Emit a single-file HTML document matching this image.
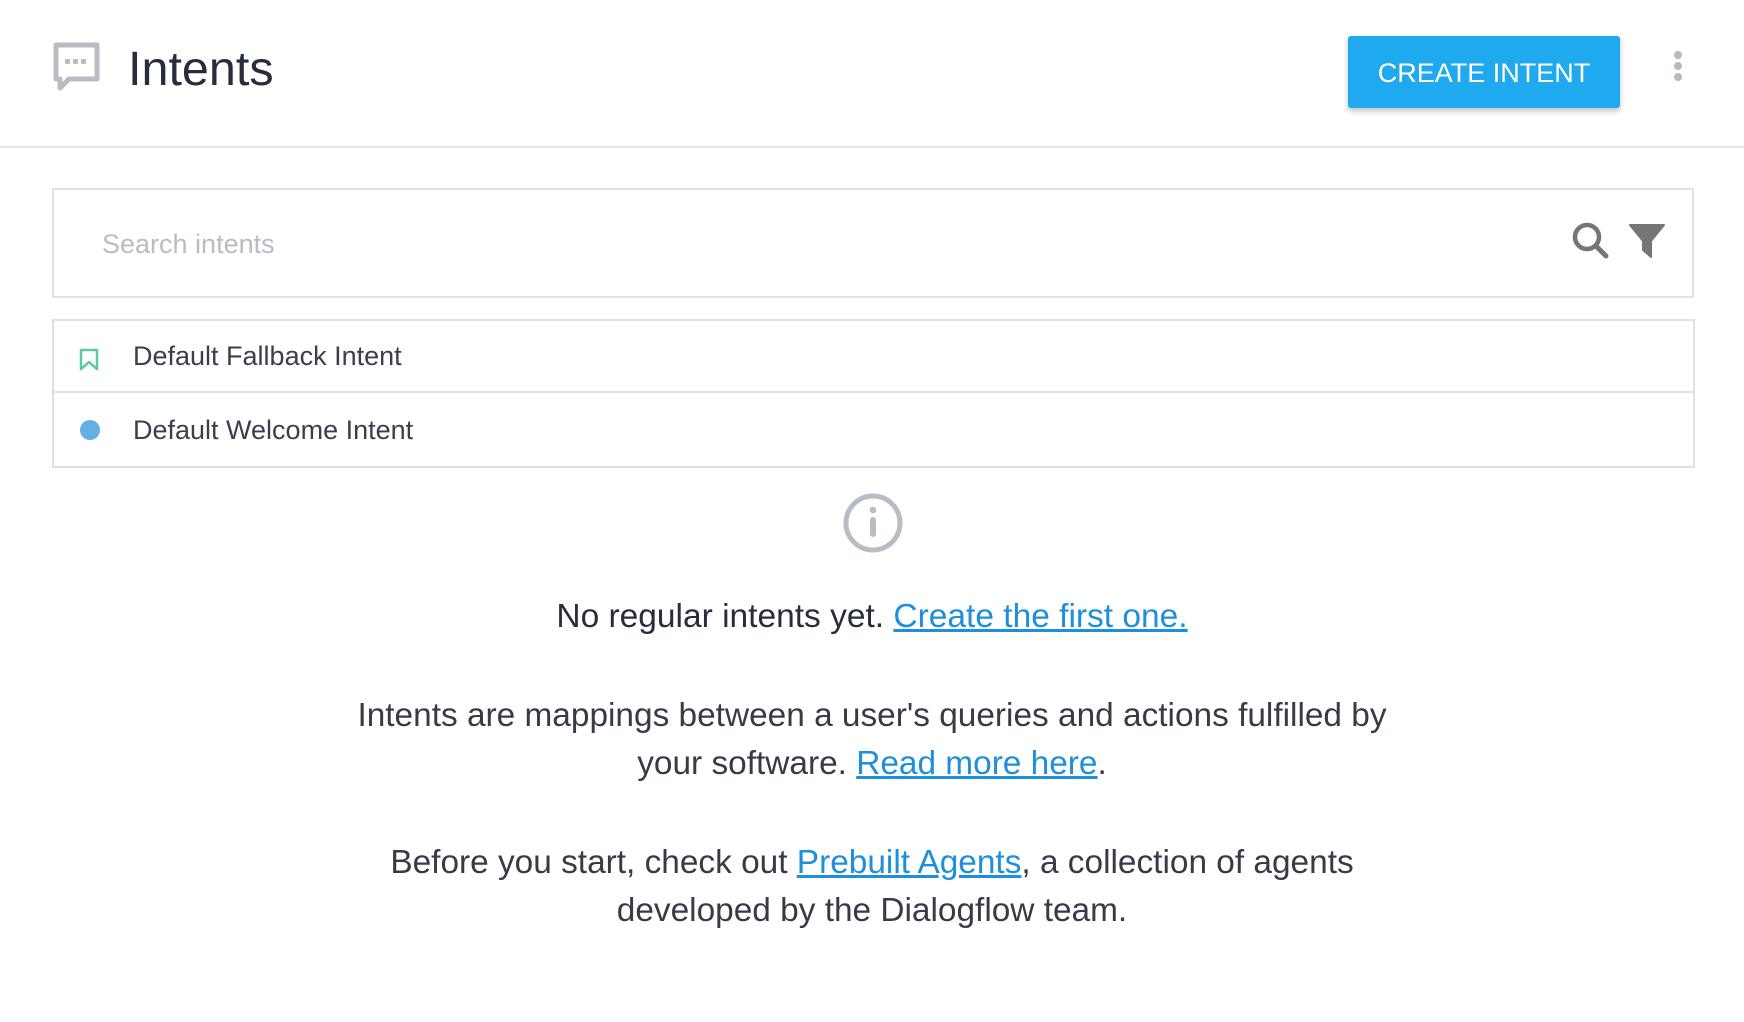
<!DOCTYPE html>
<html><head><meta charset="utf-8"><style>
*{margin:0;padding:0;box-sizing:border-box}
body{width:1744px;height:1022px;background:#fff;font-family:"Liberation Sans",sans-serif;color:#272d3a;position:relative;overflow:hidden}
.abs{position:absolute}
.link{color:#1e8fdc;text-decoration:underline}
.c{position:absolute;left:0;width:1744px;text-align:center;color:#363b47;font-size:33.4px;font-weight:300}
</style></head><body>
<svg class="abs" style="left:52px;top:42px" width="49" height="50" viewBox="0 0 49 50">
<path d="M4 3h41v34H17l-9 9v-9H4z" fill="none" stroke="#b9bcc4" stroke-width="5" stroke-linejoin="round"/>
<rect x="13" y="17" width="5" height="5" rx="1" fill="#b9bcc4"/><rect x="21" y="17" width="5" height="5" rx="1" fill="#b9bcc4"/><rect x="29" y="17" width="5" height="5" rx="1" fill="#b9bcc4"/>
</svg>
<div class="abs" style="left:128px;top:41px;font-size:48.5px;color:#272d3a">Intents</div>
<div class="abs" style="left:1348px;top:36px;width:272px;height:72px;background:#1faaef;border-radius:3px;box-shadow:0 3px 6px rgba(0,0,0,.25);color:#fff;font-size:27px;line-height:74px;text-align:center">CREATE INTENT</div>
<svg class="abs" style="left:1670px;top:48px" width="16" height="36"><circle cx="8" cy="7" r="4" fill="#b6b9c2"/><circle cx="8" cy="18" r="4" fill="#b6b9c2"/><circle cx="8" cy="29" r="4" fill="#b6b9c2"/></svg>
<div class="abs" style="left:0;top:146px;width:1744px;height:2px;background:#e4e4e4"></div>
<div class="abs" style="left:52px;top:188px;width:1642px;height:110px;border:2px solid #e2e2e2"></div>
<div class="abs" style="left:102px;top:229px;font-size:27px;color:#b8bcc4;font-weight:300">Search intents</div>
<svg class="abs" style="left:1570px;top:220px" width="42" height="42" viewBox="0 0 42 42"><circle cx="17" cy="17" r="12" fill="none" stroke="#767676" stroke-width="4.5"/><path d="M26 26l10 10" stroke="#767676" stroke-width="5" stroke-linecap="round"/></svg>
<svg class="abs" style="left:1628px;top:223px" width="38" height="38" viewBox="0 0 38 38"><path d="M2 2h34L23 18v16l-8-7V18z" fill="#767676" stroke="#767676" stroke-width="2" stroke-linejoin="round"/></svg>
<div class="abs" style="left:52px;top:319px;width:1643px;height:149px;border:2px solid #e0e0e0"></div>
<div class="abs" style="left:54px;top:391px;width:1639px;height:2px;background:#e0e0e0"></div>
<svg class="abs" style="left:79px;top:348px" width="22" height="24"><path d="M2 2h16v19l-8-7-8 7z" fill="none" stroke="#5dc8a4" stroke-width="2.5" stroke-linejoin="round"/></svg>
<div class="abs" style="left:133px;top:341px;font-size:27px;color:#3a3f4d;font-weight:300">Default Fallback Intent</div>
<div class="abs" style="left:80px;top:420px;width:20px;height:20px;border-radius:50%;background:#64afe6"></div>
<div class="abs" style="left:133px;top:415px;font-size:27px;color:#3a3f4d;font-weight:300">Default Welcome Intent</div>
<svg class="abs" style="left:842px;top:492px" width="62" height="62" viewBox="0 0 62 62"><circle cx="31" cy="31" r="27" fill="none" stroke="#b8bcc4" stroke-width="5"/><circle cx="31" cy="18" r="3.3" fill="#b8bcc4"/><rect x="28" y="25" width="6" height="20" rx="3" fill="#b8bcc4"/></svg>
<div class="c" style="top:598px;font-size:33.5px;color:#272d3a;font-weight:400">No regular intents yet. <span class="link">Create the first one.</span></div>
<div class="c" style="top:692px;line-height:48px">Intents are mappings between a user's queries and actions fulfilled by<br>your software. <span class="link">Read more here</span>.</div>
<div class="c" style="top:839px;line-height:48px">Before you start, check out <span class="link">Prebuilt Agents</span>, a collection of agents<br>developed by the Dialogflow team.</div>
</body></html>
